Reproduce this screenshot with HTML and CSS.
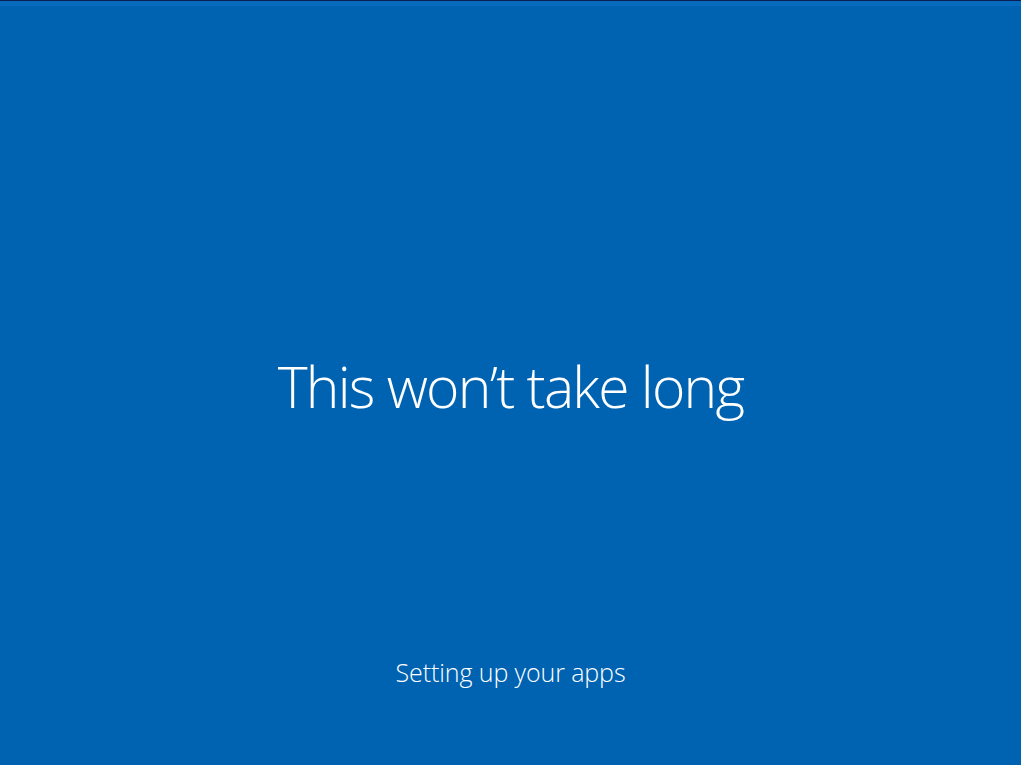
FILE: index.html
```html
<!DOCTYPE html>
<html lang="en">

<head>
  <meta charset="UTF-8">
  <meta name="viewport" content="width=device-width, initial-scale=1">
  <title>This won't take long</title>
  <link rel="stylesheet" href="styles.css">
</head>

<body>
  <div class="screen">
    <div class="top-edge"></div>
    <div class="middle">
      <div class="title">This won’t take long</div>
    </div>
    <div class="status">Setting up your apps</div>
  </div>
</body>

</html>
```

FILE: styles.css
```css
* {
  box-sizing: border-box;
  margin: 0;
  padding: 0;
}

body {
  background-color: #0063b1;
  font-family: 'Open Sans', 'Noto Sans', sans-serif;
  font-weight: 300;
  color: #ffffff;
}

.screen {
  width: 100%;
  height: 100vh;
  display: flex;
  flex-direction: column;
  background-color: #0063b1;
}

.top-edge {
  height: 6px;
  border-top: 1px solid #0c1f55;
  background-color: #066bbd;
}

.middle {
  flex: 1;
  display: flex;
  align-items: center;
  justify-content: center;
  padding-top: 110px;
}

.title {
  font-size: 57px;
  letter-spacing: -1.75px;
}

.status {
  text-align: center;
  font-size: 25px;
  letter-spacing: -0.1px;
  padding-bottom: 76px;
}
```
